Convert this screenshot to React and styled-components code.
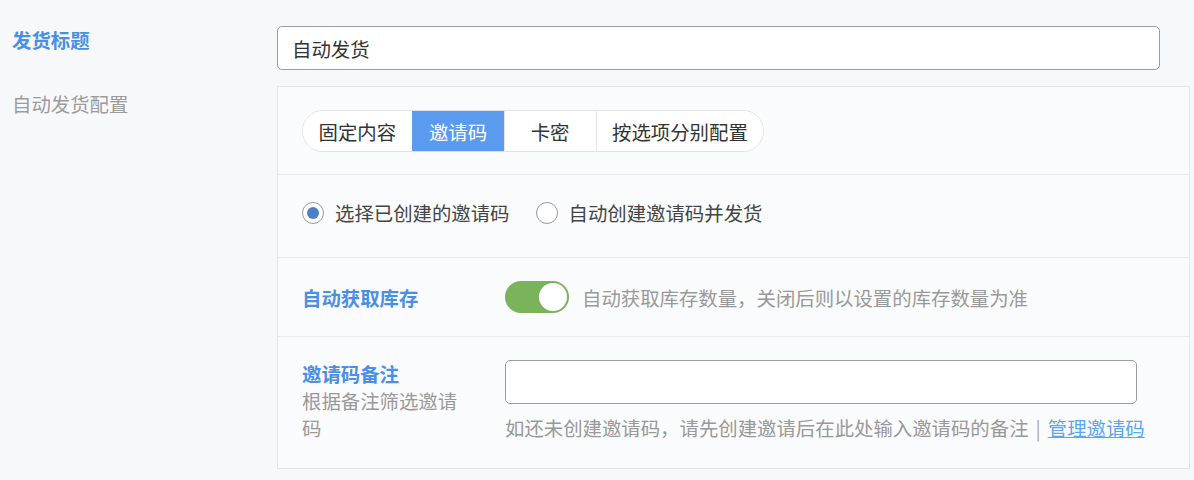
import styled, { createGlobalStyle } from "styled-components"

const GlobalStyle = createGlobalStyle`
  html, body {
    margin: 0;
    padding: 0;
    background: #f7f8fa;
    font-family: "Noto Sans CJK SC", "Noto Sans", sans-serif;
    font-size: 19.4px;
    color: #333;
  }
`

const tabs = ["固定内容", "邀请码", "卡密", "按选项分别配置"]

function App() {
  return (
    <Page>
      <GlobalStyle />
      <FormRow>
        <Label $tone="blue" $offset={0}>
          发货标题
        </Label>
        <TitleInput defaultValue="自动发货" />
      </FormRow>

      <FormRow>
        <Label $tone="gray" $offset={4}>
          自动发货配置
        </Label>
        <Panel>
          <Section $pad="23px 24px 22px">
            <TabGroup>
              {tabs.map((t) => (
                <Tab key={t} $active={t === "邀请码"}>
                  {t}
                </Tab>
              ))}
            </TabGroup>
          </Section>

          <Section $pad="24px 24px 31px">
            <RadioRow>
              <RadioOption>
                <Radio $checked />
                选择已创建的邀请码
              </RadioOption>
              <RadioOption>
                <Radio />
                自动创建邀请码并发货
              </RadioOption>
            </RadioRow>
          </Section>

          <Section $pad="23px 24px">
            <FieldRow $align="center">
              <FieldLabel>
                <Strong>自动获取库存</Strong>
              </FieldLabel>
              <ToggleLine>
                <Toggle $on>
                  <Knob />
                </Toggle>
                <Hint>自动获取库存数量，关闭后则以设置的库存数量为准</Hint>
              </ToggleLine>
            </FieldRow>
          </Section>

          <Section $pad="23px 24px 27px">
            <FieldRow $align="flex-start">
              <FieldLabel>
                <Strong>邀请码备注</Strong>
                <Sub>根据备注筛选邀请码</Sub>
              </FieldLabel>
              <FieldBody>
                <NoteInput />
                <Hint $below>
                  如还未创建邀请码，请先创建邀请后在此处输入邀请码的备注
                  <Sep>|</Sep>
                  <ManageLink href="#">管理邀请码</ManageLink>
                </Hint>
              </FieldBody>
            </FieldRow>
          </Section>
        </Panel>
      </FormRow>
    </Page>
  )
}

const Page = styled.div`
  padding: 26px 4px 12px 12px;
  display: flex;
  flex-direction: column;
  gap: 16px;
`

const FormRow = styled.div`
  display: grid;
  grid-template-columns: 265px minmax(0, 1fr);
  align-items: start;
`

const Label = styled.div`
  margin-top: ${(p) => p.$offset}px;
  line-height: 27px;
  color: ${(p) => (p.$tone === "blue" ? "#4a8fe6" : "#9b9b9b")};
  font-weight: ${(p) => (p.$tone === "blue" ? 700 : 400)};
`

const TitleInput = styled.input`
  box-sizing: border-box;
  height: 44px;
  margin-right: 30px;
  padding: 0 14px;
  border: 1px solid #9c9c9c;
  border-radius: 5px;
  background: #fff;
  font: inherit;
  color: #333;
  outline: none;
`

const Panel = styled.div`
  border: 1px solid #e3e5e8;
  background: #fafbfc;
  display: flex;
  flex-direction: column;
`

const Section = styled.div`
  padding: ${(p) => p.$pad};
  border-bottom: 1px solid #e8eaed;

  &:last-child {
    border-bottom: none;
  }
`

const TabGroup = styled.div`
  display: inline-flex;
  height: 42px;
  box-sizing: border-box;
  border: 1px solid #e2e2e2;
  border-radius: 21px;
  overflow: hidden;
  background: #fff;
`

const Tab = styled.div`
  min-width: 92px;
  box-sizing: border-box;
  padding: 0 15.5px;
  display: flex;
  align-items: center;
  justify-content: center;
  color: ${(p) => (p.$active ? "#fff" : "#333")};
  background: ${(p) => (p.$active ? "#5a9bf0" : "#fff")};
  border-left: 1px solid ${(p) => (p.$active ? "#5a9bf0" : "#e6e6e6")};

  &:first-child {
    border-left: none;
  }
`

const RadioRow = styled.div`
  display: flex;
  align-items: center;
  gap: 26px;
  line-height: 27px;
`

const RadioOption = styled.label`
  display: flex;
  align-items: center;
  gap: 11px;
  color: #444;
`

const Radio = styled.span`
  width: 22px;
  height: 22px;
  box-sizing: border-box;
  border-radius: 50%;
  border: 1px solid #9a9a9a;
  background: #fff;
  display: flex;
  align-items: center;
  justify-content: center;

  &::after {
    content: "";
    width: 12px;
    height: 12px;
    border-radius: 50%;
    background: #4c80c4;
    display: ${(p) => (p.$checked ? "block" : "none")};
  }
`

const FieldRow = styled.div`
  display: grid;
  grid-template-columns: 203px minmax(0, 1fr);
  align-items: ${(p) => p.$align};
`

const FieldLabel = styled.div`
  display: flex;
  flex-direction: column;
  line-height: 27px;
  padding-right: 38px;
`

const Strong = styled.span`
  color: #4a8fe6;
  font-weight: 700;
`

const Sub = styled.span`
  color: #999;
`

const ToggleLine = styled.div`
  display: flex;
  align-items: center;
  gap: 13px;
`

const Toggle = styled.div`
  position: relative;
  width: 64px;
  height: 32px;
  border-radius: 16px;
  background: ${(p) => (p.$on ? "#7bb35a" : "#ddd")};
  flex-shrink: 0;
`

const Knob = styled.span`
  position: absolute;
  top: 2px;
  right: 2px;
  width: 28px;
  height: 28px;
  border-radius: 50%;
  background: #fff;
`

const Hint = styled.div`
  color: #999;
  line-height: 27px;
  margin-top: ${(p) => (p.$below ? "10px" : "0")};
  white-space: nowrap;
`

const FieldBody = styled.div`
  display: flex;
  flex-direction: column;
  min-width: 0;
`

const NoteInput = styled.input`
  box-sizing: border-box;
  height: 44px;
  width: calc(100% - 28px);
  border: 1px solid #9c9c9c;
  border-radius: 5px;
  background: #fff;
  font: inherit;
  outline: none;
`

const Sep = styled.span`
  margin: 0 7px;
  color: #aaa;
`

const ManageLink = styled.a`
  color: #5aa6ee;
  text-decoration: underline;
`

export default App
